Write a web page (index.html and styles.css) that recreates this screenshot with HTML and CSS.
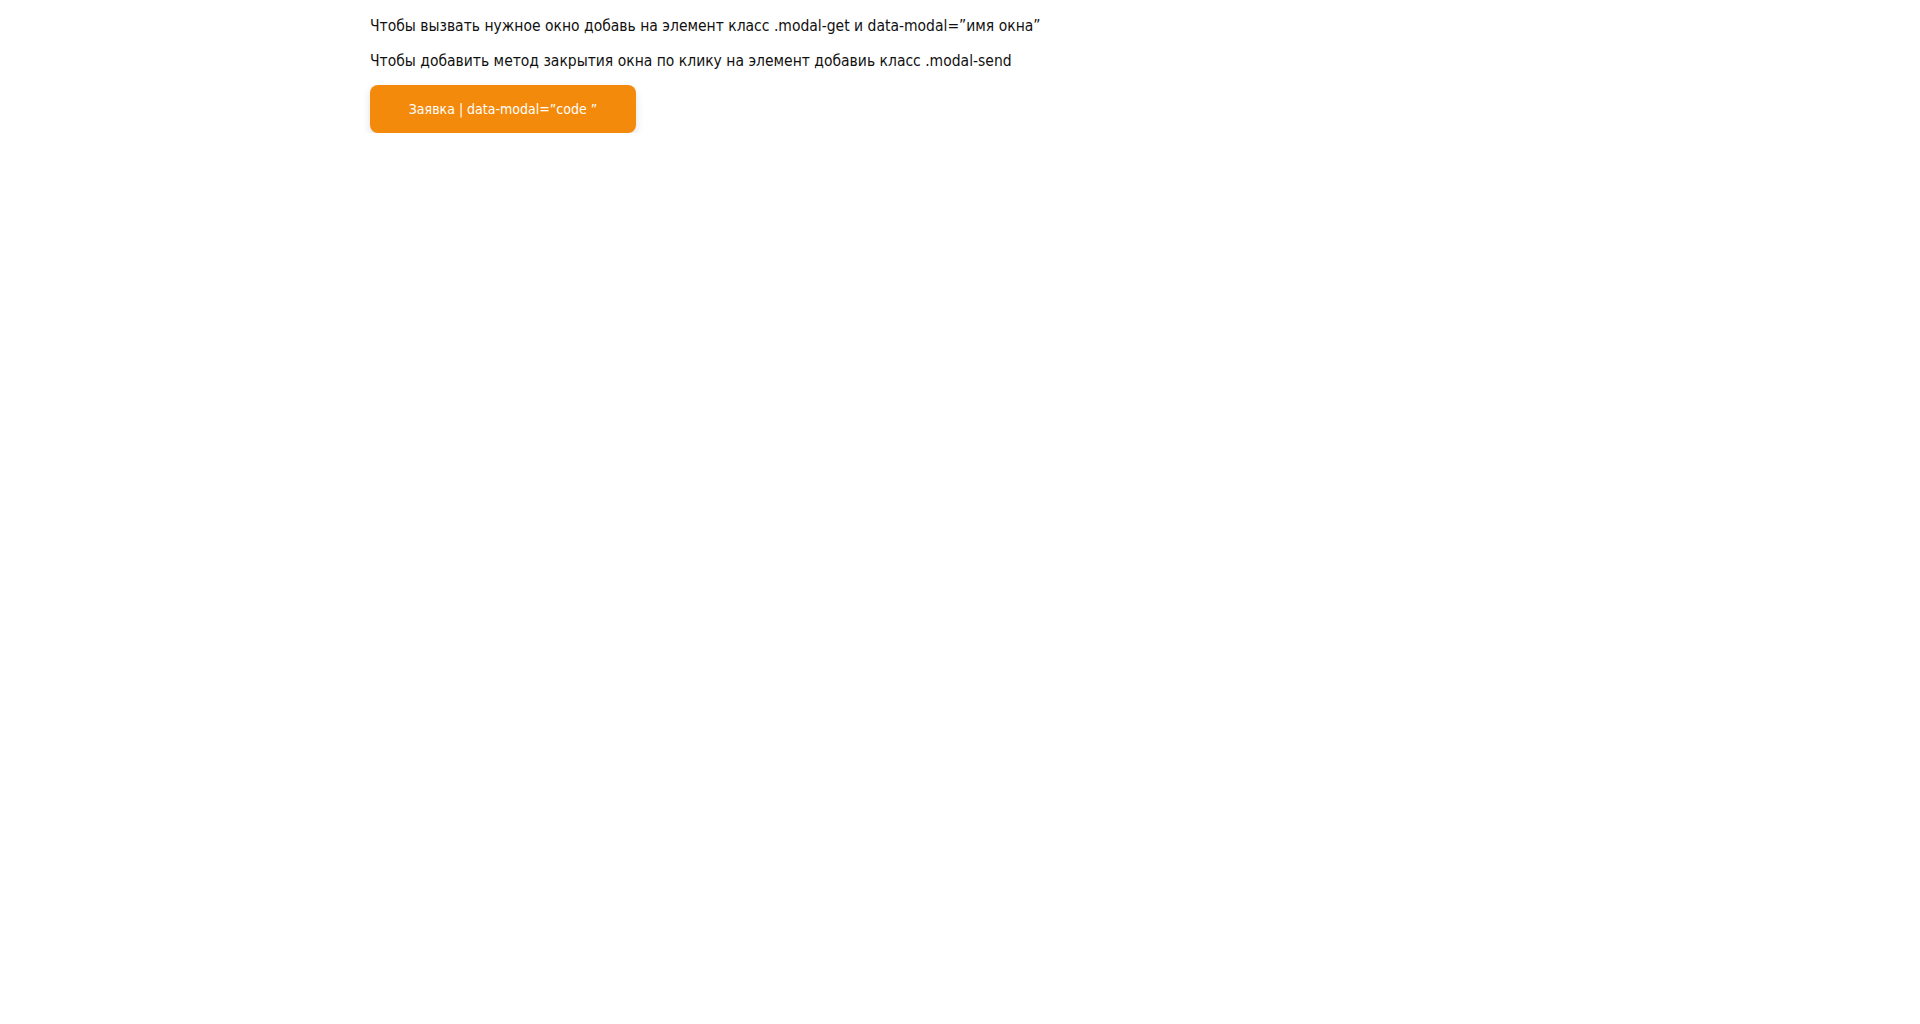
FILE: index.html
```html
<!DOCTYPE html>
<html lang="ru">
<head>
<meta charset="utf-8">
<title>Модальные окна</title>
<link rel="stylesheet" href="styles.css">
</head>
<body>
<div class="container">
  <p class="note">Чтобы вызвать нужное окно добавь на элемент класс .modal-get и data-modal=”имя окна”</p>
  <p class="note note-last">Чтобы добавить метод закрытия окна по клику на элемент добавиь класс .modal-send</p>
  <button class="btn modal-get" data-modal="code">Заявка | data-modal=”code ”</button>
</div>
</body>
</html>
```
FILE: styles.css
```css
html, body {
  margin: 0;
  padding: 0;
  background: #fff;
}
body {
  font-family: "DejaVu Sans Condensed", "DejaVu Sans", sans-serif;
  color: #111;
}
.container {
  max-width: 1180px;
  margin: 0 auto;
  padding-top: 17px;
}
.note {
  margin: 0 0 16px;
  font-size: 15.5px;
  line-height: 19px;
}
.note-last {
  margin-bottom: 14px;
}
.btn {
  display: block;
  width: 266px;
  height: 48px;
  margin-top: 0;
  border: none;
  border-radius: 8px;
  background: #f48a0b;
  color: #fff;
  font-family: inherit;
  font-size: 14px;
  box-shadow: 0 4px 8px rgba(0,0,0,0.12);
  cursor: pointer;
}
```
